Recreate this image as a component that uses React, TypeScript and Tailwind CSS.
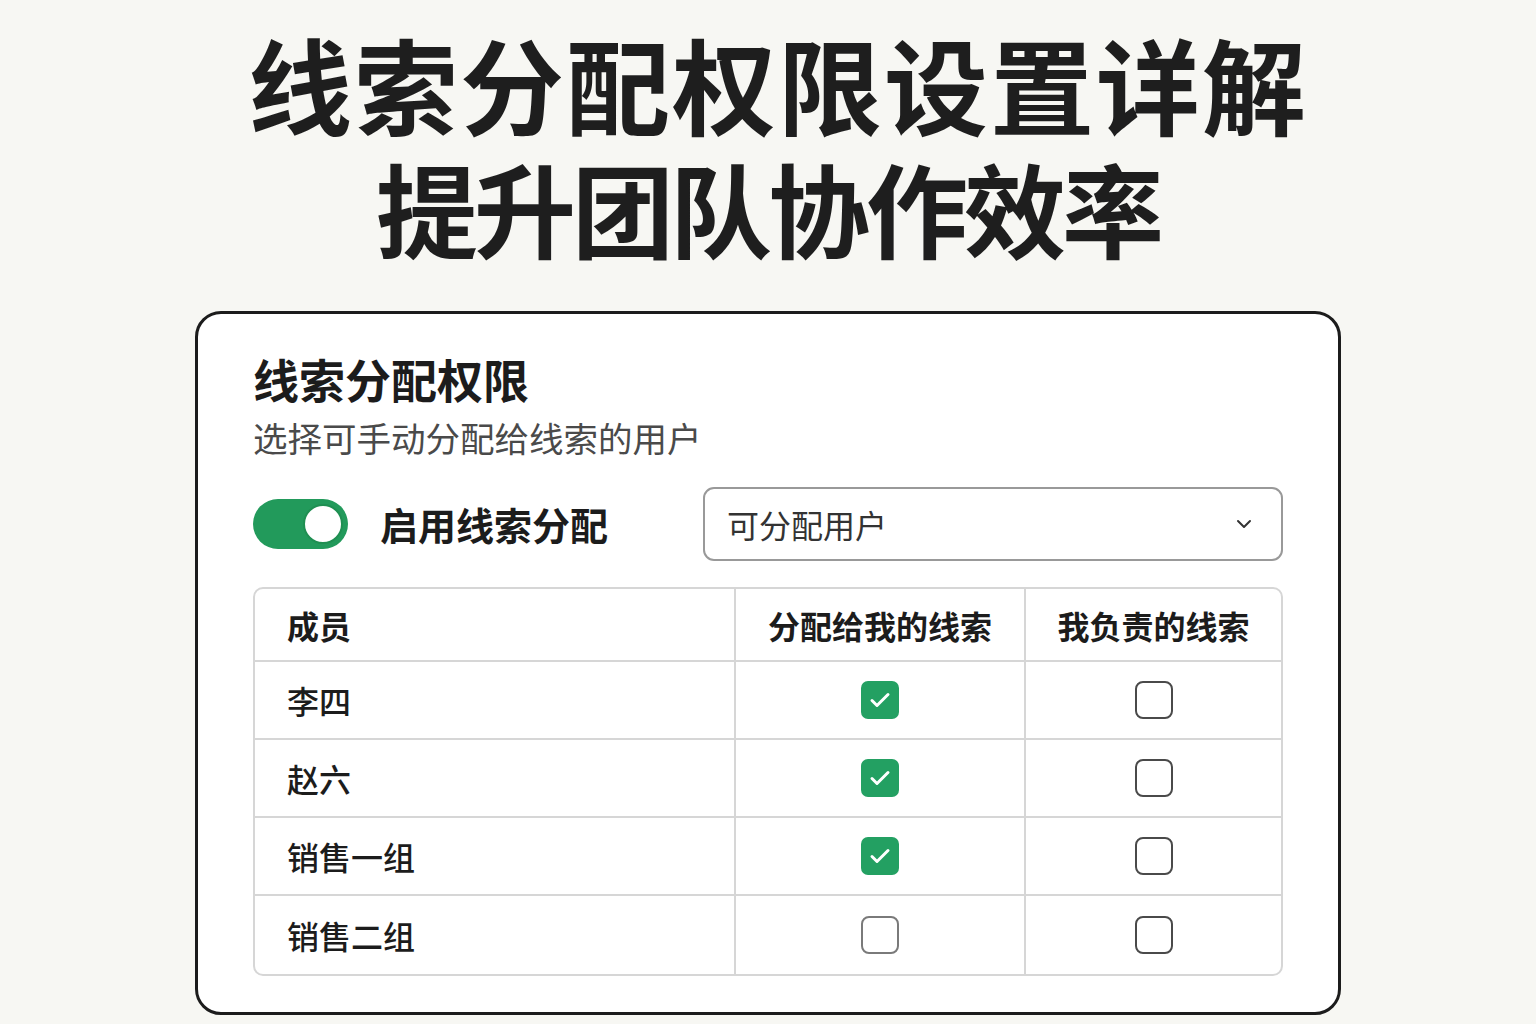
import { useState } from 'react'

interface Member {
  name: string
  assigned: boolean
  owned: boolean
}

const members: Member[] = [
  { name: '李四', assigned: true, owned: false },
  { name: '赵六', assigned: true, owned: false },
  { name: '销售一组', assigned: true, owned: false },
  { name: '销售二组', assigned: false, owned: false },
]

const font = { fontFamily: '"Noto Sans CJK SC", "Noto Sans", sans-serif' }

function CheckBox({ checked, dark }: { checked: boolean; dark?: boolean }) {
  if (checked) {
    return (
      <div className="w-[38px] h-[38px] rounded-[7px] bg-[#23a062] flex items-center justify-center">
        <svg width="28" height="28" viewBox="0 0 28 28" fill="none">
          <path d="M6 14.5l5 5L22 8.5" stroke="white" strokeWidth="3" strokeLinecap="round" strokeLinejoin="round" />
        </svg>
      </div>
    )
  }
  return (
    <div
      className={`w-[38px] h-[38px] rounded-[8px] border-[2.5px] bg-white ${dark ? 'border-[#4a4a4a]' : 'border-[#7a7a7a]'}`}
    />
  )
}

export default function App() {
  const [enabled, setEnabled] = useState(true)

  return (
    <div className="min-h-screen bg-[#f7f7f3] flex flex-col items-center pt-[21px]" style={font}>
      {/* Headline */}
      <h1 className="ml-[20px] text-[104px] leading-[124px] font-bold text-[#1e1e1e] text-center tracking-[2px]">
        线索分配权限设置详解
      </h1>
      <h1 className="text-[102px] leading-[124px] font-bold text-[#1e1e1e] text-center tracking-[-4px]">
        提升团队协作效率
      </h1>

      {/* Card */}
      <div className="mt-[42px] w-[1146px] bg-white border-[3px] border-[#1c1c1c] rounded-[26px] px-[55px] pt-[34px] pb-[36px]">
        <h2 className="text-[46px] leading-[60px] font-bold text-[#1c1c1c]">线索分配权限</h2>
        <p className="mt-[7px] text-[34.5px] leading-[44px] text-[#4a4a4a]">选择可手动分配给线索的用户</p>

        <div className="mt-[28px] flex items-center justify-between">
          <div className="flex items-center gap-[32px]">
            <button
              onClick={() => setEnabled(!enabled)}
              className={`w-[95px] h-[50px] rounded-full flex items-center px-[5px] ${enabled ? 'bg-[#229a5b] justify-end' : 'bg-[#ccc] justify-start'}`}
            >
              <span className="w-[40px] h-[40px] rounded-full bg-white border-[2px] border-[#1f8f52]" />
            </button>
            <span className="text-[38px] leading-[50px] font-bold text-[#1c1c1c]">启用线索分配</span>
          </div>
          <div className="w-[580px] h-[74px] border-[2px] border-[#999] rounded-[11px] flex items-center justify-between pl-[22px] pr-[28px]">
            <span className="text-[32px] text-[#333]">可分配用户</span>
            <svg width="18" height="12" viewBox="0 0 18 12" fill="none">
              <path d="M3 3l6 6 6-6" stroke="#333" strokeWidth="2" strokeLinecap="round" strokeLinejoin="round" />
            </svg>
          </div>
        </div>

        {/* Table */}
        <div className="mt-[26px] border-[2px] border-[#d6d6d6] rounded-[10px] overflow-hidden">
          <div className="grid grid-cols-[481px_290px_1fr] h-[73px] border-b-[2px] border-[#d6d6d6]">
            <div className="flex items-center pl-[32px] text-[32px] font-bold text-[#1c1c1c] border-r-[2px] border-[#d6d6d6]">成员</div>
            <div className="flex items-center justify-center text-[32px] font-bold text-[#1c1c1c] border-r-[2px] border-[#d6d6d6]">分配给我的线索</div>
            <div className="flex items-center justify-center text-[32px] font-bold text-[#1c1c1c]">我负责的线索</div>
          </div>
          {members.map((m, i) => (
            <div
              key={m.name}
              className={`grid grid-cols-[481px_290px_1fr] h-[78px] ${i < members.length - 1 ? 'border-b-[2px] border-[#d6d6d6]' : ''}`}
            >
              <div className="flex items-center pl-[32px] text-[32px] font-medium text-[#1c1c1c] border-r-[2px] border-[#d6d6d6]">{m.name}</div>
              <div className="flex items-center justify-center border-r-[2px] border-[#d6d6d6]">
                <CheckBox checked={m.assigned} />
              </div>
              <div className="flex items-center justify-center">
                <CheckBox checked={m.owned} dark />
              </div>
            </div>
          ))}
        </div>
      </div>
    </div>
  )
}
